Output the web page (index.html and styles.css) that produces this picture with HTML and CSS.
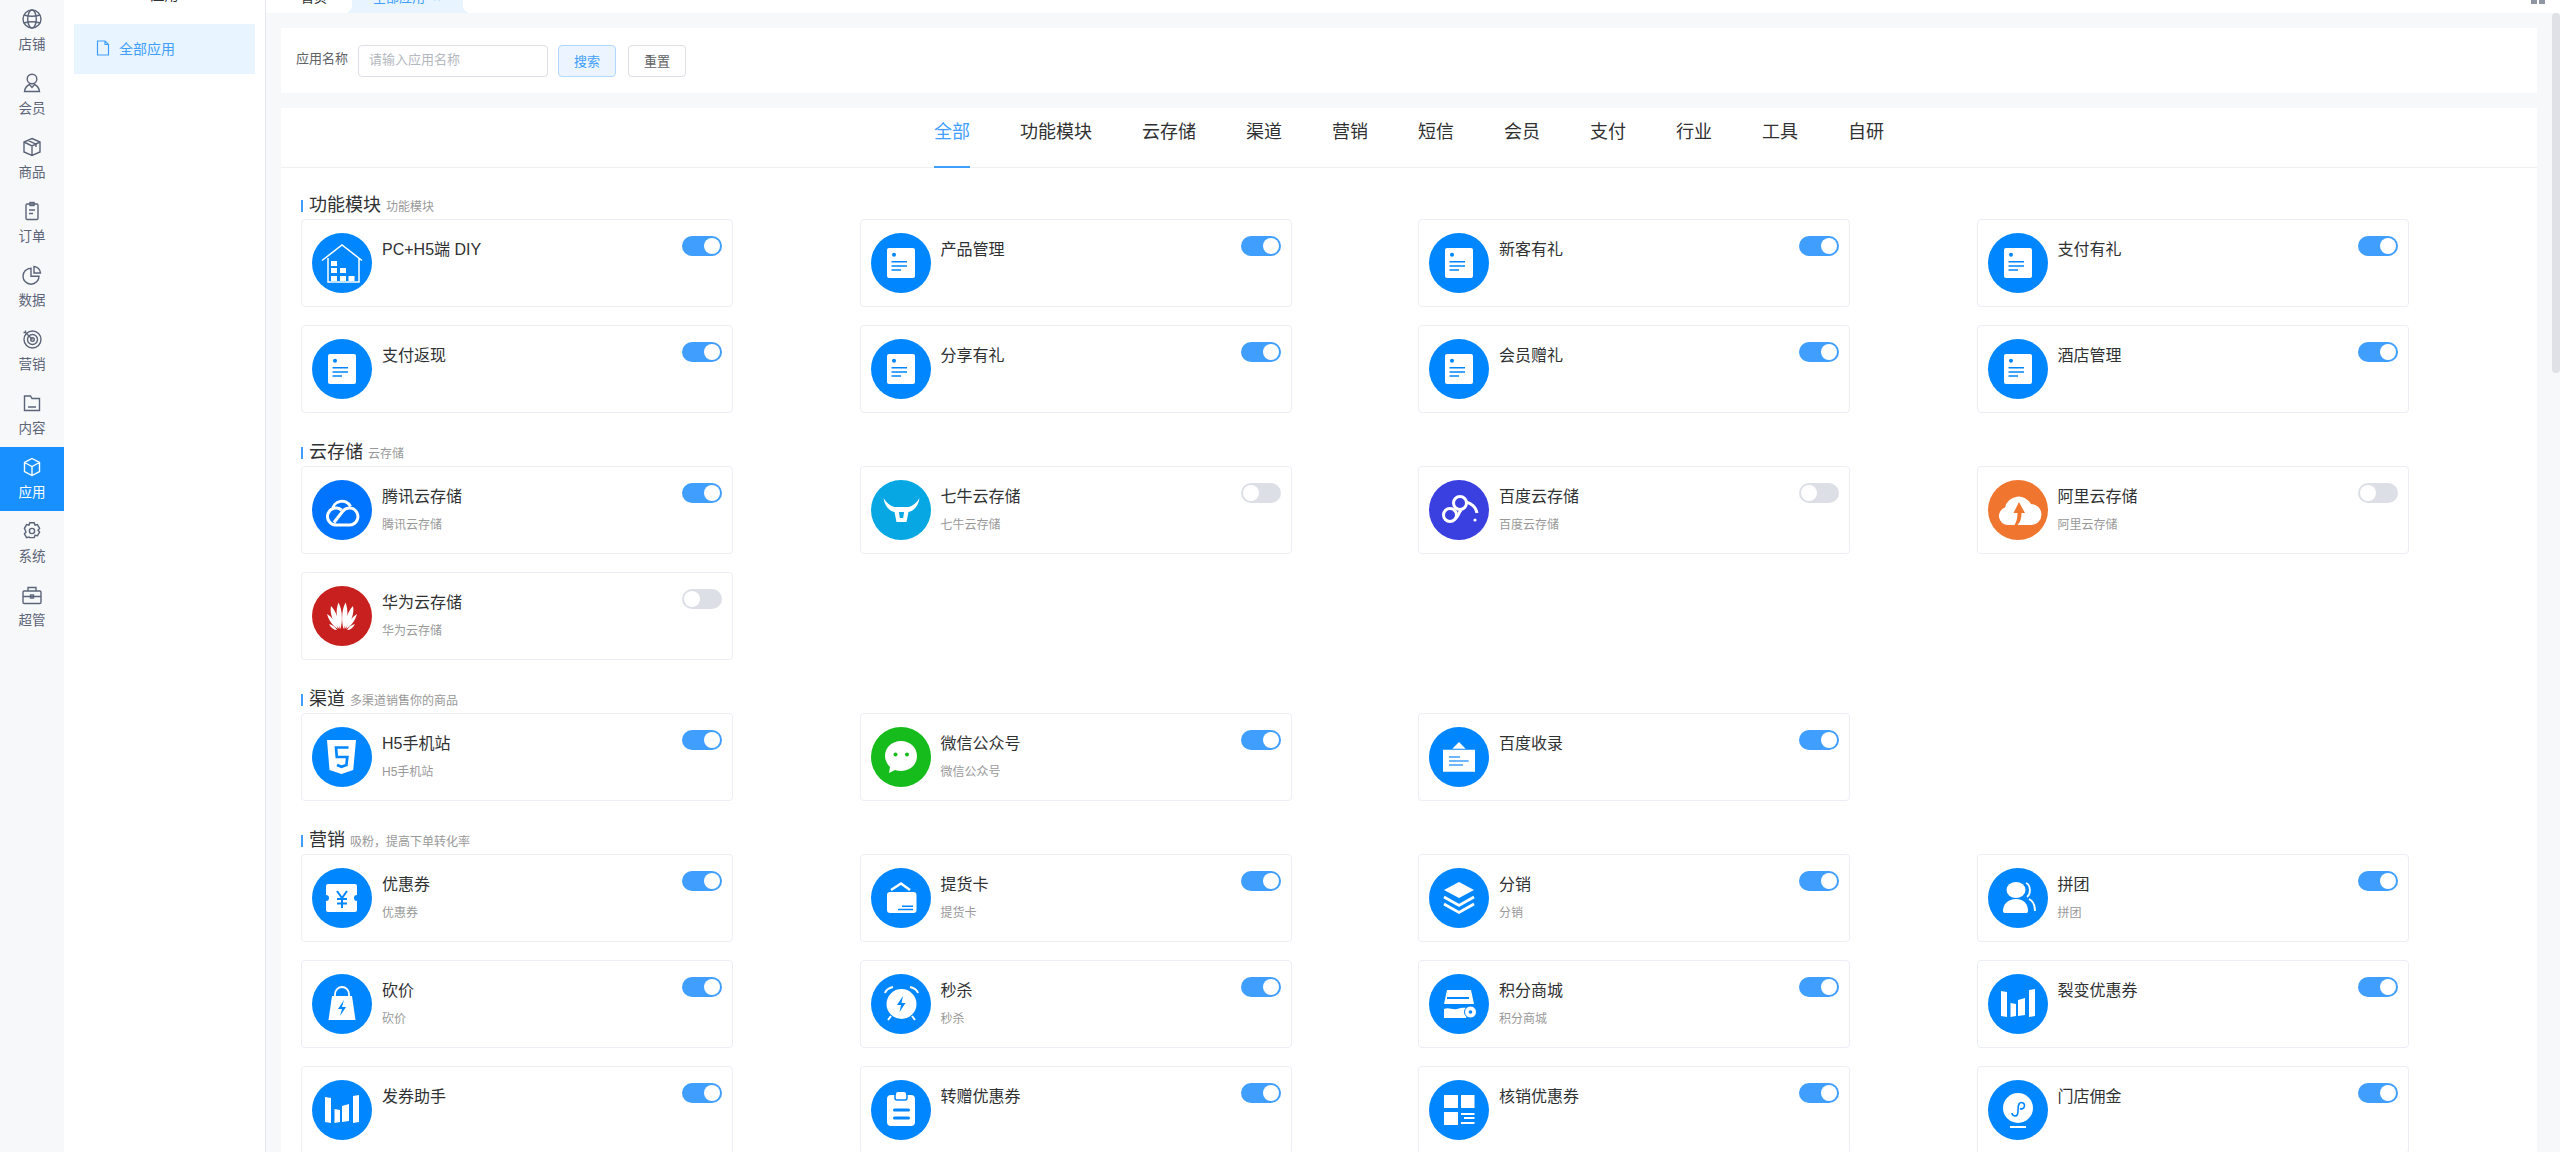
FILE: index.html
```html
<!DOCTYPE html>
<html lang="zh-CN">
<head>
  <meta charset="utf-8">
  <title>全部应用</title>
  <link rel="stylesheet" href="styles.css">
</head>
<body>
  <!-- icon set, 60x60 for app icons and 20x20 for the nav -->
  <svg class="defs">
    <symbol id="doc" viewBox="0 0 60 60">
      <rect x="16" y="15" width="28" height="30" rx="2" fill="#fff"/>
      <circle cx="23" cy="21.8" r="2" fill="#0086ff"/>
      <path d="M20.5 28.7H36M20.5 33H36M20.5 37H30" stroke="#0086ff" stroke-width="1.6" fill="none"/>
    </symbol>
    <symbol id="house" viewBox="0 0 60 60">
      <path d="M10 27.5 30 12l20 15.5M16 25v24h31V25" stroke="#fff" stroke-width="1.5" fill="none"/>
      <path d="M19 28h6v5h-6zM19 35h6v5h-6zM28 35h6v5h-6zM19 43h6v5h-6zM28 43h6v5h-6zM36.5 43h6v5h-6z" fill="#fff"/>
    </symbol>
    <symbol id="tencent" viewBox="0 0 60 60">
      <path d="M20.5 30a9.5 9.5 0 0 1 18-3.5M24 45h13.5a8.5 8.5 0 1 0-7-13.5L22 42.5M24 45a8.5 8.5 0 1 1 5.5-15" stroke="#fff" stroke-width="3" fill="none"/>
    </symbol>
    <symbol id="qiniu" viewBox="0 0 60 60">
      <path d="M12.5 18c1 8 6 13 11 14l2 10h10l2-10c5-1 10-6 11-14-3 5-7 8-11 9H23.5c-4-1-8-4-11-9z" fill="#fff"/>
      <path d="M28 32h5l-.8 6h-3.4z" fill="#06a7e2"/>
    </symbol>
    <symbol id="baidu" viewBox="0 0 60 60">
      <circle cx="31" cy="23" r="6.5" stroke="#fff" stroke-width="3" fill="none"/>
      <circle cx="21" cy="35" r="6.5" stroke="#fff" stroke-width="3" fill="none"/>
      <path d="M26 39c3-2 3-5 6-9M37 22c5 1 10 5 11 11" stroke="#fff" stroke-width="3" fill="none"/>
      <circle cx="46" cy="40" r="1.6" fill="#fff"/>
    </symbol>
    <symbol id="ali" viewBox="0 0 60 60">
      <path d="M20 45a9 9 0 0 1-3-17.5A14 14 0 0 1 43 24a10.5 10.5 0 0 1 0 21z" fill="#fff"/>
      <path d="M31 22l6 11h-3.5c0 5-1 9-4 12h-3c2-3 3-7 3-12h-4z" fill="#f0752f"/>
    </symbol>
    <symbol id="huawei" viewBox="0 0 60 60">
      <g fill="#fff">
        <path d="M28.5 43C24 34 23.500 24 26.500 16.500 30 23 31 34 28.500 43z"/>
        <path d="M31.500 43C36 34 36.500 24 33.500 16.500 30 23 29 34 31.500 43z"/>
        <path d="M27.500 43C20.500 36 17.500 27 19 20c5 5 8 14 8.500 23z"/>
        <path d="M32.500 43C39.500 36 42.500 27 41 20c-5 5-8 14-8.500 23z"/>
        <path d="M26 43c-5-3-9-8-11-15 5 3 9 8 11 15z"/>
        <path d="M34 43c5-3 9-8 11-15-5 3-9 8-11 15z"/>
        <path d="M25 44c-3 0-6-2-8-6 4 1 6 3 8 6z"/>
        <path d="M35 44c3 0 6-2 8-6-4 1-6 3-8 6z"/>
      </g>
    </symbol>
    <symbol id="html5" viewBox="0 0 60 60">
      <path d="M15 13h29l-2.8 30-11.7 4-12-4z" fill="#fff"/>
      <path d="M36.5 20.5H24l.8 9.500h10.5l-.9 8-4.900 1.800L25 38" stroke="#0086ff" stroke-width="2.7" fill="none"/>
    </symbol>
    <symbol id="wechat" viewBox="0 0 60 60">
      <path d="M30 14c9 0 16 6.5 16 15s-7 15-16 15c-2 0-4-.3-6-1l-6 3 1-6c-3-3-5-7-5-11 0-8.5 7-15 16-15z" fill="#fff"/>
      <circle cx="24.5" cy="27.6" r="2" fill="#16bc1c"/>
      <circle cx="36" cy="27.6" r="2" fill="#16bc1c"/>
    </symbol>
    <symbol id="notice" viewBox="0 0 60 60">
      <path d="M30 15l6.7 6.7H23.3zM14 22.7h32v22H14z" fill="#fff"/>
      <path d="M20 30h11M20 34h19.7M20 38h14" stroke="#3f9fff" stroke-width="1.5" fill="none"/>
    </symbol>
    <symbol id="coupon" viewBox="0 0 60 60">
      <path d="M16 16h27a2 2 0 0 1 2 2v9a3 3 0 0 0 0 6v9a2 2 0 0 1-2 2H16a2 2 0 0 1-2-2v-9a3 3 0 0 0 0-6v-9a2 2 0 0 1 2-2z" fill="#fff"/>
      <path d="M25 23l5 7 5-7M30 30v10M25 31h10M25 35.5h10" stroke="#0086ff" stroke-width="2" fill="none"/>
    </symbol>
    <symbol id="wallet" viewBox="0 0 60 60">
      <path d="M20 22l10-6.5 9 6.500" stroke="#fff" stroke-width="2.5" fill="none"/>
      <rect x="16" y="24" width="29.5" height="21" rx="3" fill="#fff"/>
      <path d="M31 38.3h11M27 41.5h15" stroke="#0086ff" stroke-width="1.6" fill="none"/>
    </symbol>
    <symbol id="bag" viewBox="0 0 60 60">
      <path d="M23 22v-2a7 7 0 0 1 14 0v2" stroke="#fff" stroke-width="1.8" fill="none"/>
      <path d="M20 22h20l3.5 24h-27z" fill="#fff"/>
      <path d="M32 26l-6 9h4l-2 7 6-9h-4z" fill="#0086ff"/>
    </symbol>
    <symbol id="clock" viewBox="0 0 60 60">
      <circle cx="30.5" cy="30" r="15" fill="#fff"/>
      <path d="M14 19c1-3 4-5 8-6M47 19c-1-3-4-5-8-6M20 42l-3 4M41 42l3 4" stroke="#fff" stroke-width="2" fill="none"/>
      <path d="M32 22l-6 9h4l-1.5 7 6-9h-4z" fill="#0086ff"/>
    </symbol>
    <symbol id="stack" viewBox="0 0 60 60">
      <path d="M30 14l15 8-15 8-15-8z" fill="#fff"/>
      <path d="M15 29l15 8.5 15-8.500M15 36l15 8.5 15-8.500" stroke="#fff" stroke-width="2.8" fill="none"/>
    </symbol>
    <symbol id="people" viewBox="0 0 60 60">
      <ellipse cx="28" cy="22" rx="9.5" ry="8" fill="#fff"/>
      <path d="M15 43c0-7 5-12 13-12s12 5 12 12c0 1.5-1 2-2 2H17c-1 0-2-.5-2-2z" fill="#fff"/>
      <path d="M38 15c5 2 5 11 1 14M41 31c4 2 6 7 6 12" stroke="#fff" stroke-width="1.8" fill="none"/>
    </symbol>
    <symbol id="shop" viewBox="0 0 60 60">
      <path d="M18 16h24l3 14H15z" fill="#fff"/>
      <path d="M18 24h22" stroke="#0086ff" stroke-width="2" fill="none"/>
      <path d="M15 35c5-2 8 1 13 0s7-2 12 0l-3 9H15z" fill="#fff"/>
      <circle cx="41.5" cy="38" r="6" fill="#fff" stroke="#0086ff"/>
      <circle cx="41.5" cy="38" r="1.8" fill="#0086ff"/>
    </symbol>
    <symbol id="bars" viewBox="0 0 60 60">
      <path d="M13 17l6 1v25l-6-1zM22.5 29l5.5 1v12l-5.5 1zM30 26l7-2v17l-7 1zM41 16l6-1v27l-6 1z" fill="#fff"/>
    </symbol>
    <symbol id="clip" viewBox="0 0 60 60">
      <path d="M20 15h5v-1a2 2 0 0 1 2-2h6a2 2 0 0 1 2 2v1h5a4 4 0 0 1 4 4v23a4 4 0 0 1-4 4H20a4 4 0 0 1-4-4V19a4 4 0 0 1 4-4z" fill="#fff"/>
      <path d="M24 15v3a2 2 0 0 0 2 2h8a2 2 0 0 0 2-2v-3" stroke="#0086ff" stroke-width="1.5" fill="none"/>
      <rect x="22" y="28.5" width="17" height="3" rx="1.5" fill="#0086ff"/>
      <rect x="22" y="36.5" width="17" height="3" rx="1.5" fill="#0086ff"/>
    </symbol>
    <symbol id="tiles" viewBox="0 0 60 60">
      <path d="M15 15h14v13H15zM32 15h13.5v13H32zM15 32h14v13H15z" fill="#fff"/>
      <path d="M32 33h13.5v2H32zM35 37h10.5v2H35zM32 42h13.5v2H32z" fill="#fff"/>
    </symbol>
    <symbol id="mini" viewBox="0 0 60 60">
      <circle cx="30" cy="28" r="15" fill="#fff"/>
      <path d="M24 33c0 3 4 4 5.5 1.5 1-2 0-8 1.5-10.5 1.5-2.5 5.500-1.500 5.500 1.500s-3 4-4.500 3" stroke="#0086ff" stroke-width="1.6" fill="none"/>
      <path d="M22 47h16" stroke="#fff" stroke-width="2" fill="none"/>
    </symbol>

    <symbol id="nav-globe" viewBox="0 0 20 20">
      <circle cx="10" cy="10" r="9"/>
      <ellipse cx="10" cy="10" rx="4.3" ry="9"/>
      <path d="M2 6c5 1.5 11 1.5 16 0M2 14c5-1.5 11-1.5 16 0"/>
    </symbol>
    <symbol id="nav-user" viewBox="0 0 20 20">
      <circle cx="10" cy="6" r="4.8"/>
      <path d="M7.5 11.5C5 12.5 3 15 2.5 18.5h15C17 15 15 12.5 12.5 11.5L10 14.5z"/>
    </symbol>
    <symbol id="nav-box" viewBox="0 0 20 20">
      <path d="M10 1.5l8 3.5v10l-8 3.5L2 15V5zM2 5l8 4 8-4M10 9v9.5M6 3.3l8 3.9V10"/>
    </symbol>
    <symbol id="nav-clip" viewBox="0 0 20 20">
      <rect x="4" y="3" width="12" height="15.5" rx="1.2"/>
      <rect x="8" y="1.5" width="4" height="3"/>
      <path d="M7 9h6M7 12.5h4"/>
    </symbol>
    <symbol id="nav-pie" viewBox="0 0 20 20">
      <path d="M9 3.2a8 8 0 1 0 8 8H9zM12 1.5A7 7 0 0 1 18.5 8H12z"/>
    </symbol>
    <symbol id="nav-target" viewBox="0 0 20 20">
      <circle cx="10.5" cy="10.5" r="8.5"/>
      <circle cx="10.5" cy="10.5" r="5"/>
      <circle cx="10.5" cy="10.5" r="1.8"/>
      <path d="M10.5 10.5L3.5 3.5M1.5 3.5h2v-2"/>
    </symbol>
    <symbol id="nav-folder" viewBox="0 0 20 20">
      <path d="M2.5 3h6L10 5.500h7.500v12h-15zM6 14h8"/>
    </symbol>
    <symbol id="nav-cube" viewBox="0 0 20 20">
      <path d="M10 1.5l7.5 4v9l-7.5 4-7.5-4v-9zM2.5 5.5l7.5 4 7.500-4M10 9.500v9"/>
    </symbol>
    <symbol id="nav-gear" viewBox="0 0 20 20">
      <path d="M7.8 1.8h4.4l.8 2.300 2.400-.5 2.200 3.800-1.600 1.800 1.600 1.800-2.200 3.800-2.400-.5-.8 2.300H7.800L7 16.100l-2.400.5-2.200-3.800L4 11 2.400 7.400l2.200-3.800 2.400.5z"/>
      <circle cx="10" cy="10" r="2.6"/>
    </symbol>
    <symbol id="nav-tool" viewBox="0 0 20 20">
      <rect x="1" y="6" width="18" height="12.5" rx="1.2"/>
      <path d="M6 6V2.5h8V6M1 11.5h18"/>
      <rect x="8.5" y="10" width="3" height="3"/>
    </symbol>
    <symbol id="nav-file" viewBox="0 0 14 16">
      <path d="M1.5 1H9l3.5 3.5V15h-11zM9 1v3.5h3.5"/>
    </symbol>
  </svg>

  <nav class="nav">
    <a class="nav-item"><svg class="nav-ico"><use href="#nav-globe"/></svg><span>店铺</span></a>
    <a class="nav-item"><svg class="nav-ico"><use href="#nav-user"/></svg><span>会员</span></a>
    <a class="nav-item"><svg class="nav-ico"><use href="#nav-box"/></svg><span>商品</span></a>
    <a class="nav-item"><svg class="nav-ico"><use href="#nav-clip"/></svg><span>订单</span></a>
    <a class="nav-item"><svg class="nav-ico"><use href="#nav-pie"/></svg><span>数据</span></a>
    <a class="nav-item"><svg class="nav-ico"><use href="#nav-target"/></svg><span>营销</span></a>
    <a class="nav-item"><svg class="nav-ico"><use href="#nav-folder"/></svg><span>内容</span></a>
    <a class="nav-item active"><svg class="nav-ico"><use href="#nav-cube"/></svg><span>应用</span></a>
    <a class="nav-item"><svg class="nav-ico"><use href="#nav-gear"/></svg><span>系统</span></a>
    <a class="nav-item"><svg class="nav-ico"><use href="#nav-tool"/></svg><span>超管</span></a>
  </nav>

  <aside class="subnav">
    <div class="subnav-title">应用</div>
    <a class="subnav-item"><svg class="file-ico"><use href="#nav-file"/></svg>全部应用</a>
  </aside>

  <div class="main">
    <div class="tabbar">
      <span class="page-tab">首页</span>
      <span class="page-tab active">全部应用<i class="tab-close">×</i></span>
      <span class="tabbar-more"></span>
    </div>

    <div class="content">
      <form class="search-card">
        <label class="search-label" for="appName">应用名称</label>
        <input class="search-input" id="appName" type="text" placeholder="请输入应用名称">
        <button class="btn btn-primary" type="button">搜索</button>
        <button class="btn" type="button">重置</button>
      </form>

      <div class="list-card">
        <div class="cat-tabs">
          <a class="cat-tab active">全部</a>
          <a class="cat-tab">功能模块</a>
          <a class="cat-tab">云存储</a>
          <a class="cat-tab">渠道</a>
          <a class="cat-tab">营销</a>
          <a class="cat-tab">短信</a>
          <a class="cat-tab">会员</a>
          <a class="cat-tab">支付</a>
          <a class="cat-tab">行业</a>
          <a class="cat-tab">工具</a>
          <a class="cat-tab">自研</a>
        </div>

        <div class="cat-body">
          <section>
            <h3 class="sec-head"><span class="sec-title">功能模块</span><small class="sec-sub">功能模块</small></h3>
            <div class="app-grid">
              <div class="app-card"><svg class="app-ico"><use href="#house"/></svg><div class="app-text"><div class="app-name">PC+H5端 DIY</div></div><span class="switch"></span></div>
              <div class="app-card"><svg class="app-ico"><use href="#doc"/></svg><div class="app-text"><div class="app-name">产品管理</div></div><span class="switch"></span></div>
              <div class="app-card"><svg class="app-ico"><use href="#doc"/></svg><div class="app-text"><div class="app-name">新客有礼</div></div><span class="switch"></span></div>
              <div class="app-card"><svg class="app-ico"><use href="#doc"/></svg><div class="app-text"><div class="app-name">支付有礼</div></div><span class="switch"></span></div>
              <div class="app-card"><svg class="app-ico"><use href="#doc"/></svg><div class="app-text"><div class="app-name">支付返现</div></div><span class="switch"></span></div>
              <div class="app-card"><svg class="app-ico"><use href="#doc"/></svg><div class="app-text"><div class="app-name">分享有礼</div></div><span class="switch"></span></div>
              <div class="app-card"><svg class="app-ico"><use href="#doc"/></svg><div class="app-text"><div class="app-name">会员赠礼</div></div><span class="switch"></span></div>
              <div class="app-card"><svg class="app-ico"><use href="#doc"/></svg><div class="app-text"><div class="app-name">酒店管理</div></div><span class="switch"></span></div>
            </div>
          </section>

          <section>
            <h3 class="sec-head"><span class="sec-title">云存储</span><small class="sec-sub">云存储</small></h3>
            <div class="app-grid">
              <div class="app-card"><svg class="app-ico tencent"><use href="#tencent"/></svg><div class="app-text"><div class="app-name">腾讯云存储</div><div class="app-desc">腾讯云存储</div></div><span class="switch"></span></div>
              <div class="app-card"><svg class="app-ico qiniu"><use href="#qiniu"/></svg><div class="app-text"><div class="app-name">七牛云存储</div><div class="app-desc">七牛云存储</div></div><span class="switch off"></span></div>
              <div class="app-card"><svg class="app-ico baidu"><use href="#baidu"/></svg><div class="app-text"><div class="app-name">百度云存储</div><div class="app-desc">百度云存储</div></div><span class="switch off"></span></div>
              <div class="app-card"><svg class="app-ico ali"><use href="#ali"/></svg><div class="app-text"><div class="app-name">阿里云存储</div><div class="app-desc">阿里云存储</div></div><span class="switch off"></span></div>
              <div class="app-card"><svg class="app-ico huawei"><use href="#huawei"/></svg><div class="app-text"><div class="app-name">华为云存储</div><div class="app-desc">华为云存储</div></div><span class="switch off"></span></div>
            </div>
          </section>

          <section>
            <h3 class="sec-head"><span class="sec-title">渠道</span><small class="sec-sub">多渠道销售你的商品</small></h3>
            <div class="app-grid">
              <div class="app-card"><svg class="app-ico"><use href="#html5"/></svg><div class="app-text"><div class="app-name">H5手机站</div><div class="app-desc">H5手机站</div></div><span class="switch"></span></div>
              <div class="app-card"><svg class="app-ico wechat"><use href="#wechat"/></svg><div class="app-text"><div class="app-name">微信公众号</div><div class="app-desc">微信公众号</div></div><span class="switch"></span></div>
              <div class="app-card"><svg class="app-ico"><use href="#notice"/></svg><div class="app-text"><div class="app-name">百度收录</div></div><span class="switch"></span></div>
            </div>
          </section>

          <section>
            <h3 class="sec-head"><span class="sec-title">营销</span><small class="sec-sub">吸粉，提高下单转化率</small></h3>
            <div class="app-grid">
              <div class="app-card"><svg class="app-ico"><use href="#coupon"/></svg><div class="app-text"><div class="app-name">优惠券</div><div class="app-desc">优惠券</div></div><span class="switch"></span></div>
              <div class="app-card"><svg class="app-ico"><use href="#wallet"/></svg><div class="app-text"><div class="app-name">提货卡</div><div class="app-desc">提货卡</div></div><span class="switch"></span></div>
              <div class="app-card"><svg class="app-ico"><use href="#stack"/></svg><div class="app-text"><div class="app-name">分销</div><div class="app-desc">分销</div></div><span class="switch"></span></div>
              <div class="app-card"><svg class="app-ico"><use href="#people"/></svg><div class="app-text"><div class="app-name">拼团</div><div class="app-desc">拼团</div></div><span class="switch"></span></div>
              <div class="app-card"><svg class="app-ico"><use href="#bag"/></svg><div class="app-text"><div class="app-name">砍价</div><div class="app-desc">砍价</div></div><span class="switch"></span></div>
              <div class="app-card"><svg class="app-ico"><use href="#clock"/></svg><div class="app-text"><div class="app-name">秒杀</div><div class="app-desc">秒杀</div></div><span class="switch"></span></div>
              <div class="app-card"><svg class="app-ico"><use href="#shop"/></svg><div class="app-text"><div class="app-name">积分商城</div><div class="app-desc">积分商城</div></div><span class="switch"></span></div>
              <div class="app-card"><svg class="app-ico"><use href="#bars"/></svg><div class="app-text"><div class="app-name">裂变优惠券</div></div><span class="switch"></span></div>
              <div class="app-card"><svg class="app-ico"><use href="#bars"/></svg><div class="app-text"><div class="app-name">发券助手</div></div><span class="switch"></span></div>
              <div class="app-card"><svg class="app-ico"><use href="#clip"/></svg><div class="app-text"><div class="app-name">转赠优惠券</div></div><span class="switch"></span></div>
              <div class="app-card"><svg class="app-ico"><use href="#tiles"/></svg><div class="app-text"><div class="app-name">核销优惠券</div></div><span class="switch"></span></div>
              <div class="app-card"><svg class="app-ico"><use href="#mini"/></svg><div class="app-text"><div class="app-name">门店佣金</div></div><span class="switch"></span></div>
            </div>
          </section>
        </div>
      </div>
    </div>
  </div>

  <div class="scroll-thumb"></div>
</body>
</html>
```

FILE: styles.css
```css
* {
  box-sizing: border-box;
}
html, body {
  height: 100%;
}
body {
  display: flex;
  margin: 0;
  overflow: hidden;
  font-family: "Liberation Sans", "Noto Sans CJK SC", sans-serif;
  font-size: 14px;
  color: #303133;
  background: #fff;
}
.defs {
  display: none;
}

/* first level nav */
.nav {
  flex: none;
  width: 64px;
  background: #f7f8fa;
}
.nav-item {
  display: flex;
  flex-direction: column;
  align-items: center;
  height: 64px;
  padding-top: 10px;
  color: #5c6478;
  line-height: 20px;
  font-size: 13.5px;
}
.nav-item:first-child {
  height: 63px;
  padding-top: 9px;
}
.nav-item span {
  margin-top: 6px;
}
.nav-item.active {
  background: #1890ff;
  color: #fff;
}
.nav-ico {
  width: 20px;
  height: 20px;
  fill: none;
  stroke: currentColor;
  stroke-width: 1.4;
}

/* second level nav */
.subnav {
  flex: none;
  width: 202px;
  padding: 0 10px;
  border-right: 1px solid #e4e7ed;
}
.subnav-title {
  margin: -12px 0 22px;
  line-height: 14px;
  text-align: center;
  font-size: 14px;
}
.subnav-item {
  display: flex;
  align-items: center;
  gap: 9px;
  height: 50px;
  padding: 0 0 2px 22px;
  background: #e8f4ff;
  color: #409eff;
  font-size: 14px;
}
.file-ico {
  width: 14px;
  height: 16px;
  fill: none;
  stroke: currentColor;
  stroke-width: 1.2;
}

.main {
  flex: 1;
  min-width: 0;
  display: flex;
  flex-direction: column;
}

/* page tabs, scrolled mostly off the top */
.tabbar {
  position: relative;
  flex: none;
  display: flex;
  align-items: flex-end;
  height: 13px;
  padding-left: 35px;
}
.page-tab {
  position: relative;
  flex: none;
  padding-bottom: 5px;
  line-height: 20px;
  font-size: 13px;
}
.page-tab.active {
  margin-left: 25px;
  padding: 0 22px 5px 21px;
  background: #e8f4ff;
  color: #409eff;
}
.page-tab.active::before,
.page-tab.active::after {
  content: "";
  position: absolute;
  bottom: 0;
  width: 8px;
  height: 8px;
}
.page-tab.active::before {
  left: -8px;
  background: radial-gradient(circle at 0 0, #fff 8px, #e8f4ff 8.5px);
}
.page-tab.active::after {
  right: -8px;
  background: radial-gradient(circle at 100% 0, #fff 8px, #e8f4ff 8.5px);
}
.tab-close {
  margin-left: 8px;
  font-style: normal;
  font-size: 13px;
}
.tabbar-more {
  position: absolute;
  top: 0;
  right: 15px;
  width: 14px;
  height: 4px;
  background: linear-gradient(to right, #8f96a3 6px, transparent 6px, transparent 8px, #8f96a3 8px);
}

.content {
  flex: 1;
  min-height: 0;
  overflow: hidden;
  padding: 15px 23px 0 15px;
  background: #f7f8fa;
}

/* search form */
.search-card {
  display: flex;
  align-items: center;
  height: 65px;
  padding-left: 15px;
  background: #fff;
}
.search-label {
  width: 62px;
  margin-top: -6px;
  color: #606266;
  font-size: 13px;
}
.search-input {
  width: 190px;
  height: 32px;
  padding: 0 10px 2px;
  border: 1px solid #dcdfe6;
  border-radius: 4px;
  font: inherit;
  font-size: 13px;
  outline: none;
}
.search-input::placeholder {
  color: #b4b8c0;
}
.btn {
  width: 58px;
  height: 32px;
  margin-left: 12px;
  padding: 0;
  border: 1px solid #dcdfe6;
  border-radius: 4px;
  background: #fff;
  color: #606266;
  font: inherit;
  font-size: 13px;
}
.btn-primary {
  margin-left: 10px;
  border-color: #b3d8ff;
  background: #ecf5ff;
  color: #409eff;
}

/* category tabs */
.list-card {
  margin-top: 15px;
  background: #fff;
}
.cat-tabs {
  display: flex;
  justify-content: center;
  gap: 50px;
  height: 60px;
  border-bottom: 1px solid #eef0f3;
}
.cat-tab {
  height: 60px;
  line-height: 48px;
  font-size: 18px;
}
.cat-tab.active {
  border-bottom: 2px solid #409eff;
  color: #409eff;
}
.cat-body {
  padding: 16px 0 0 20px;
}

.sec-head {
  display: flex;
  height: 35px;
  margin: 0;
  padding-top: 12px;
  font-weight: 400;
}
.sec-head::before {
  content: "";
  flex: none;
  width: 2px;
  height: 12px;
  margin-top: 4px;
  background: #409eff;
}
.sec-title {
  margin-left: 6px;
  line-height: 18px;
  font-size: 18px;
}
.sec-sub {
  margin: 4px 0 0 5px;
  line-height: 14px;
  color: #999;
  font-size: 12px;
}

/* app cards */
.app-grid {
  display: grid;
  grid-template-columns: repeat(4, 432px);
  column-gap: 126.5px;
  row-gap: 18px;
  margin-bottom: 18px;
}
.app-card {
  display: flex;
  height: 88px;
  padding: 13px 10px 0 10px;
  border: 1px solid #ebeef5;
  border-radius: 4px;
}
.app-ico {
  flex: none;
  width: 60px;
  height: 60px;
  border-radius: 50%;
  background: #0086ff;
}
.app-ico.tencent { background: #0073ff; }
.app-ico.qiniu { background: #06a7e2; }
.app-ico.baidu { background: #3a3fe0; }
.app-ico.ali { background: #f0752f; }
.app-ico.huawei { background: #c8201e; }
.app-ico.wechat { background: #16bc1c; }
.app-text {
  flex: 1;
  min-width: 0;
  padding: 5px 0 0 10px;
}
.app-name {
  line-height: 24px;
  font-size: 16px;
}
.app-desc {
  margin-top: 8px;
  line-height: 16px;
  color: #999;
  font-size: 12px;
}

.switch {
  position: relative;
  flex: none;
  width: 40px;
  height: 20px;
  margin-top: 3px;
  border-radius: 10px;
  background: #409eff;
}
.switch::after {
  content: "";
  position: absolute;
  top: 2px;
  right: 2px;
  width: 16px;
  height: 16px;
  border-radius: 50%;
  background: #fff;
}
.switch.off {
  background: #dcdfe6;
}
.switch.off::after {
  right: auto;
  left: 2px;
}

/* the page scrollbar, sits over the edge of the content */
.scroll-thumb {
  position: absolute;
  top: 13px;
  right: 0;
  width: 8px;
  height: 360px;
  border-radius: 4px;
  background: #dfe1e6;
}
```
